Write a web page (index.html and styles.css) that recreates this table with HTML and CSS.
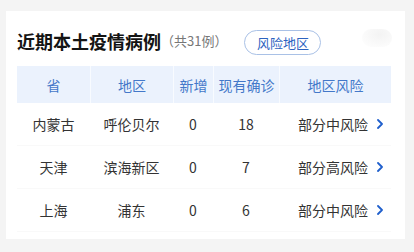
FILE: index.html
```html
<!DOCTYPE html>
<html lang="zh">
<head>
<meta charset="utf-8">
<link rel="stylesheet" href="styles.css">
</head>
<body>
<div class="card">
  <div class="title-row">
    <h1 class="title">近期本土疫情病例</h1>
    <span class="count">（共31例）</span>
    <span class="pill">风险地区</span>
    <span class="ghost"></span>
  </div>
  <div class="table">
    <div class="row head">
      <div class="c c1">省</div>
      <div class="c c2">地区</div>
      <div class="c c3">新增</div>
      <div class="c c4">现有确诊</div>
      <div class="c c5">地区风险</div>
    </div>
    <div class="row">
      <div class="c c1">内蒙古</div>
      <div class="c c2">呼伦贝尔</div>
      <div class="c c3">0</div>
      <div class="c c4">18</div>
      <div class="c c5 risk"><span>部分中风险</span><svg class="chev" viewBox="0 0 6 10" width="6" height="10"><path d="M1 1 L5 5 L1 9" fill="none" stroke="#1f5fcc" stroke-width="1.8" stroke-linecap="round" stroke-linejoin="round"/></svg></div>
    </div>
    <div class="row">
      <div class="c c1">天津</div>
      <div class="c c2">滨海新区</div>
      <div class="c c3">0</div>
      <div class="c c4">7</div>
      <div class="c c5 risk"><span>部分高风险</span><svg class="chev" viewBox="0 0 6 10" width="6" height="10"><path d="M1 1 L5 5 L1 9" fill="none" stroke="#1f5fcc" stroke-width="1.8" stroke-linecap="round" stroke-linejoin="round"/></svg></div>
    </div>
    <div class="row">
      <div class="c c1">上海</div>
      <div class="c c2">浦东</div>
      <div class="c c3">0</div>
      <div class="c c4">6</div>
      <div class="c c5 risk"><span>部分中风险</span><svg class="chev" viewBox="0 0 6 10" width="6" height="10"><path d="M1 1 L5 5 L1 9" fill="none" stroke="#1f5fcc" stroke-width="1.8" stroke-linecap="round" stroke-linejoin="round"/></svg></div>
    </div>
  </div>
</div>
</body>
</html>
```
FILE: styles.css
```css
html, body {
  margin: 0;
  padding: 0;
  background: #f4f4f4;
  font-family: "Noto Sans CJK SC", "Noto Sans", sans-serif;
}
.card {
  margin: 11px 9px 0 6px;
  width: 399px;
  height: 228px;
  background: #ffffff;
  box-sizing: border-box;
  padding: 0 14px 0 11px;
}
.title-row {
  display: flex;
  align-items: center;
  height: 26px;
  padding: 17px 0 12px;
}
.title {
  margin: 0;
  font-size: 18px;
  font-weight: 700;
  color: #141414;
  line-height: 26px;
}
.count {
  font-size: 13px;
  color: #777;
  line-height: 26px;
}
.pill {
  margin-left: 17px;
  width: 77px;
  height: 25px;
  box-sizing: border-box;
  border: 1px solid #a9c1e6;
  border-radius: 13px;
  color: #2d63bf;
  font-size: 13px;
  display: flex;
  align-items: center;
  justify-content: center;
  margin-top: 3px;
}
.ghost {
  margin-left: auto;
  margin-right: -1px;
  width: 30px;
  height: 18px;
  border-radius: 9px;
  background: radial-gradient(ellipse at 60% 30%, #f3f3f3 0%, #f9f9f9 50%, #ffffff 100%);
  margin-top: -6px;
}
.table {
  display: flex;
  flex-direction: column;
}
.row {
  display: grid;
  grid-template-columns: 73px 83px 40px 66px 112px;
  height: 43px;
  border-bottom: 1px solid #f9f9f9;
  box-sizing: border-box;
}
.row.head {
  height: 37px;
  border-bottom: none;
  background: #ebf2fd;
}
.c {
  display: flex;
  align-items: center;
  justify-content: center;
  font-size: 14px;
  color: #333333;
}
.head .c {
  color: #4378c9;
  border-left: 1px solid #f8fbff;
}
.head .c1 {
  border-left: none;
}
.risk {
  justify-content: flex-start;
  padding-left: 19px;
  gap: 9px;
}
.chev {
  display: block;
}
```
